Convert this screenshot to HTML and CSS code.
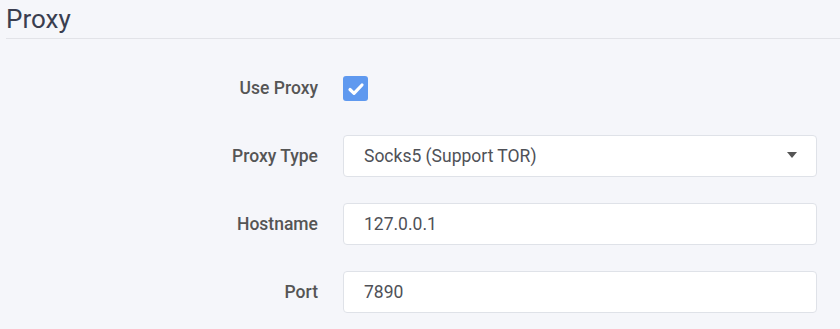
FILE: index.html
```html
<!DOCTYPE html>
<html>
<head>
    <meta charset="utf-8" />
    <title>Proxy</title>
    <link rel="stylesheet" href="styles.css">
</head>
<body>
    <div class="header">
        <h1>Proxy</h1>
    </div>
    <form class="form">
        <label class="label">Use Proxy</label>
        <div class="field">
            <span class="checkbox">
                <svg width="25" height="25" viewBox="0 0 25 25">
                    <path d="M7 13.5 L11 17.3 L19 9" fill="none" stroke="#fff" stroke-width="3.2" stroke-linecap="round" stroke-linejoin="round" />
                </svg>
            </span>
        </div>

        <label class="label">Proxy Type</label>
        <div class="field">
            <div class="select">
                <span>Socks5 (Support TOR)</span>
                <span class="arrow"></span>
            </div>
        </div>

        <label class="label">Hostname</label>
        <div class="field">
            <input class="input" type="text" value="127.0.0.1">
        </div>

        <label class="label">Port</label>
        <div class="field">
            <input class="input" type="text" value="7890">
        </div>
    </form>
</body>
</html>
```

FILE: styles.css
```css
body {
    margin: 0;
    background-color: #f5f6fa;
    font-family: Roboto, "Liberation Sans", sans-serif;
}

.header {
    margin-left: 6px;
    padding: 4px 0 4px 0;
    border-bottom: 1px solid #e2e3e8;
}

h1 {
    margin: 0;
    font-size: 26px;
    line-height: 30px;
    font-weight: 400;
    color: #3a3e50;
}

.form {
    display: grid;
    grid-template-columns: 318px 1fr;
    grid-auto-rows: 42px;
    column-gap: 25px;
    row-gap: 26px;
    align-items: center;
    margin-top: 28px;
    padding-right: 23px;
}

.label {
    text-align: right;
    font-size: 17.5px;
    font-weight: 500;
    color: #555;
}

.field {
    display: flex;
    align-items: center;
    height: 100%;
}

.checkbox {
    display: block;
    width: 25px;
    height: 25px;
    border-radius: 3px;
    background-color: #5f99ef;
}

.checkbox svg {
    display: block;
}

.select,
.input {
    box-sizing: border-box;
    width: 100%;
    height: 42px;
    border: 1px solid #dfe2e8;
    border-radius: 4px;
    background-color: #fff;
    padding: 0 19px 0 20px;
    font-family: Roboto, "Liberation Sans", sans-serif;
    font-size: 17.5px;
    color: #4f5157;
}

.select {
    display: flex;
    align-items: center;
    justify-content: space-between;
}

.input {
    outline: none;
}

.arrow {
    width: 0;
    height: 0;
    margin-top: -3px;
    border-left: 5.5px solid transparent;
    border-right: 5.5px solid transparent;
    border-top: 6px solid #555;
}
```
